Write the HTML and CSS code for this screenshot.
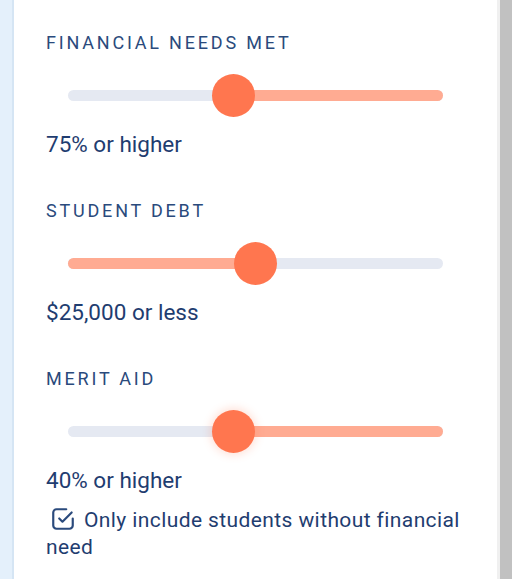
FILE: index.html
```html
<!DOCTYPE html>
<html>
<head>
<meta charset="utf-8">
<link rel="stylesheet" href="styles.css">
</head>
<body>
<div class="layout">
  <div class="side"></div>
  <div class="panel">
    <section class="filter">
      <div class="label">FINANCIAL NEEDS MET</div>
      <div class="slider">
        <div class="track">
          <div class="fill fill-right" style="left:44%"></div>
          <div class="thumb" style="left:44%"></div>
        </div>
      </div>
      <div class="value">75% or higher</div>
    </section>
    <section class="filter">
      <div class="label">STUDENT DEBT</div>
      <div class="slider">
        <div class="track">
          <div class="fill fill-left" style="width:50%"></div>
          <div class="thumb" style="left:50%"></div>
        </div>
      </div>
      <div class="value">$25,000 or less</div>
    </section>
    <section class="filter">
      <div class="label">MERIT AID</div>
      <div class="slider">
        <div class="track">
          <div class="fill fill-right" style="left:44%"></div>
          <div class="thumb glow" style="left:44%"></div>
        </div>
      </div>
      <div class="value">40% or higher</div>
      <label class="check">
        <svg class="check-icon" viewBox="0 0 24 24" width="26" height="26" fill="none" stroke="currentColor" stroke-width="2" stroke-linecap="round" stroke-linejoin="round"><path d="M21 11.5V18a3 3 0 0 1-3 3H6a3 3 0 0 1-3-3V6a3 3 0 0 1 3-3h9"/><path d="M8.5 11.5l3 3L20 6"/></svg>Only include students without financial need
      </label>
    </section>
  </div>
  <div class="edge"></div>
  <div class="scrollbar"></div>
  <div class="outer"></div>
</div>
</body>
</html>
```
FILE: styles.css
```css
html, body {
  margin: 0;
  padding: 0;
  background: #ffffff;
}
.layout {
  display: flex;
  height: 579px;
  overflow: hidden;
}
.side {
  width: 12px;
  background: #e4f0fb;
  border-right: 2px solid #d5e5f4;
}
.panel {
  box-sizing: border-box;
  width: 483px;
  padding: 33px 32px 0 32px;
  background: #ffffff;
  font-family: Roboto, "Liberation Sans", sans-serif;
  color: #1f3d70;
}
.edge {
  width: 3px;
  background: #f0f0f0;
}
.scrollbar {
  width: 12px;
  background: #c1c1c1;
}
.outer {
  flex: 1;
  background: #ffffff;
}
.filter {
  display: flex;
  flex-direction: column;
  margin-bottom: 44px;
}
.label {
  font-size: 18px;
  line-height: 20px;
  letter-spacing: 2.8px;
  color: #2a4a7c;
}
.slider {
  height: 44px;
  margin: 20px 0 14px;
  padding: 0 22px;
  display: flex;
  align-items: center;
}
.track {
  position: relative;
  flex: 1;
  height: 11px;
  border-radius: 6px;
  background: #e5e9f2;
}
.fill {
  position: absolute;
  top: 0;
  bottom: 0;
  background: #ffab92;
  border-radius: 6px;
}
.fill-right {
  right: 0;
}
.fill-left {
  left: 0;
}
.thumb {
  position: absolute;
  top: 50%;
  width: 43px;
  height: 43px;
  margin: -21.5px 0 0 -21.5px;
  border-radius: 50%;
  background: #ff764f;
}
.thumb.glow {
  box-shadow: 0 0 8px 2px rgba(255, 118, 79, 0.22);
}
.value {
  font-size: 22.5px;
  line-height: 26px;
  color: #1f3d70;
}
.check {
  display: block;
  margin-top: 13px;
  font-size: 21px;
  line-height: 27px;
  letter-spacing: 0.4px;
  color: #1f3d70;
}
.check-icon {
  vertical-align: -5px;
  margin: 0 8px 0 4px;
  color: #2a4a7c;
}
```
